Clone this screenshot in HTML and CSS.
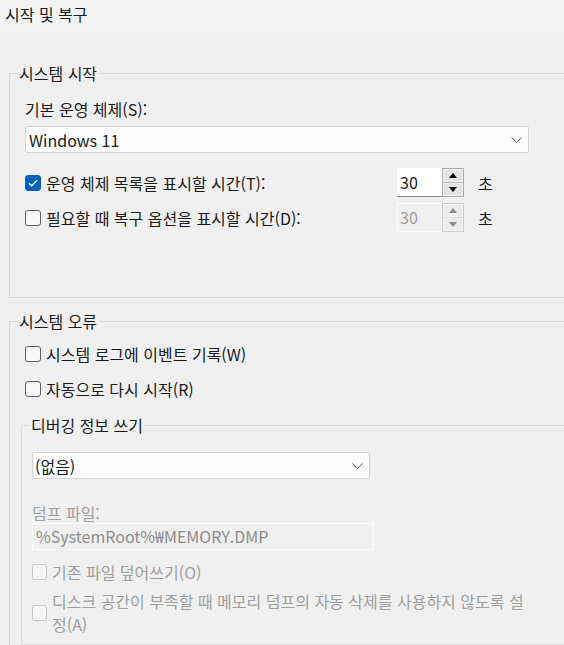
FILE: index.html
```html
<!DOCTYPE html>
<html lang="ko">
<head>
  <meta charset="UTF-8">
  <title>시작 및 복구</title>
  <link rel="stylesheet" href="styles.css">
</head>
<body>

<div class="titlebar">시작 및 복구</div>

<div class="page">

  <!-- 시스템 시작 -->
  <fieldset class="group">
    <legend>시스템 시작</legend>
    <div class="group-body start-body">
      <div class="field-label">기본 운영 체제(S):</div>
      <div class="select os-select">
        <span>Windows 11</span>
        <svg class="chevron" width="11" height="6" viewBox="0 0 11 6"><polyline points="0.5,0.5 5.5,5.5 10.5,0.5" fill="none" stroke="#5c5c5c" stroke-width="1"/></svg>
      </div>

      <div class="timer-row first">
        <label class="check">
          <span class="box checked">
            <svg width="10" height="8" viewBox="0 0 10 8"><polyline points="1,4.2 3.7,6.8 9,1.2" fill="none" stroke="#fff" stroke-width="1.3"/></svg>
          </span>
          <span>운영 체제 목록을 표시할 시간(T):</span>
        </label>
        <div class="spin">
          <span class="spin-value">30</span>
          <span class="spin-btns">
            <span class="spin-btn"><i class="arrow up"></i></span>
            <span class="spin-btn"><i class="arrow down"></i></span>
          </span>
        </div>
        <span class="unit">초</span>
      </div>

      <div class="timer-row">
        <label class="check">
          <span class="box"></span>
          <span>필요할 때 복구 옵션을 표시할 시간(D):</span>
        </label>
        <div class="spin disabled">
          <span class="spin-value">30</span>
          <span class="spin-btns">
            <span class="spin-btn"><i class="arrow up"></i></span>
            <span class="spin-btn"><i class="arrow down"></i></span>
          </span>
        </div>
        <span class="unit">초</span>
      </div>
    </div>
  </fieldset>

  <!-- 시스템 오류 -->
  <fieldset class="group error-group">
    <legend>시스템 오류</legend>
    <div class="group-body error-body">
      <label class="check check-row">
        <span class="box"></span>
        <span>시스템 로그에 이벤트 기록(W)</span>
      </label>
      <label class="check check-row restart">
        <span class="box"></span>
        <span>자동으로 다시 시작(R)</span>
      </label>

      <fieldset class="group debug-group">
        <legend>디버깅 정보 쓰기</legend>
        <div class="group-body debug-body">
          <div class="select dump-select">
            <span>(없음)</span>
            <svg class="chevron" width="11" height="6" viewBox="0 0 11 6"><polyline points="0.5,0.5 5.5,5.5 10.5,0.5" fill="none" stroke="#5c5c5c" stroke-width="1"/></svg>
          </div>
          <div class="field-label disabled dump-label">덤프 파일:</div>
          <div class="textbox disabled">%SystemRoot%₩MEMORY.DMP</div>
          <label class="check check-row disabled overwrite">
            <span class="box small"></span>
            <span>기존 파일 덮어쓰기(O)</span>
          </label>
          <label class="check disabled wrap-row">
            <span class="box small"></span>
            <span class="wrap-text">디스크 공간이 부족할 때 메모리 덤프의 자동 삭제를 사용하지 않도록 설정(A)</span>
          </label>
        </div>
      </fieldset>
    </div>
  </fieldset>

</div>

</body>
</html>
```

FILE: styles.css
```css
body {
  margin: 0;
  background-color: #f0f0f0;
  color: #1a1a1a;
  font-family: "Noto Sans CJK KR", "Noto Sans", sans-serif;
  font-size: 16px;
  line-height: 20px;
  overflow: hidden;
}

.titlebar {
  height: 33px;
  background-color: #f3f3f3;
  padding-left: 5px;
  line-height: 28px;
}

.page {
  width: 640px;
  padding: 30px 0 0 9px;
}

/* group boxes */
.group {
  margin: 0;
  padding: 0;
  border: 1px solid #dadada;
  min-width: 0;
}

.group legend {
  margin-left: 7px;
  padding: 0 2px;
  line-height: 20px;
}

.start-body {
  padding: 16px 0 65px 15px;
}

.error-group {
  margin-top: 13px;
}

.error-body {
  padding: 12px 0 12px 15px;
}

.debug-group {
  margin: 15px 0 0 -4px;
}

.debug-body {
  padding: 17px 0 8px 10px;
}

.field-label.disabled,
.check.disabled {
  color: #9e9e9e;
}

/* combo box */
.select {
  box-sizing: border-box;
  height: 27px;
  display: flex;
  align-items: center;
  justify-content: space-between;
  background-color: #fdfdfd;
  border: 1px solid #d3d3d3;
  border-radius: 2px;
  padding: 0 6px 0 3px;
}

.os-select {
  width: 504px;
  margin-top: 7px;
}

.dump-select {
  width: 338px;
  padding-left: 2px;
}

.chevron {
  display: block;
}

/* text box */
.textbox {
  box-sizing: border-box;
  width: 342px;
  height: 27px;
  line-height: 25px;
  padding-left: 3px;
  border: 1px solid #fbfbfb;
  color: #8c8c8c;
}

.dump-label {
  margin-top: 24px;
}

/* check boxes */
.check {
  display: flex;
  align-items: center;
  gap: 5px;
}

.check-row {
  height: 22px;
}

.restart {
  margin-top: 13px;
}

.overwrite {
  margin-top: 11px;
}

.wrap-row {
  margin-top: 7px;
  line-height: 23px;
}

.wrap-text {
  width: 478px;
}

.box {
  box-sizing: border-box;
  flex: none;
  width: 16px;
  height: 16px;
  border: 1px solid #5e5e5e;
  border-radius: 3px;
  background-color: #f8f8f8;
  display: flex;
  align-items: center;
  justify-content: center;
}

.box.small {
  width: 15px;
}

.box.checked {
  background-color: #0062bd;
  border-color: #0062bd;
}

.check.disabled .box {
  border-color: #c6c6c6;
  background-color: #f6f6f6;
}

/* timer rows with spinner */
.timer-row {
  display: grid;
  grid-template-columns: 358px 67px auto;
  column-gap: 14px;
  align-items: center;
  height: 29px;
  margin-top: 6px;
}

.timer-row.first {
  margin-top: 15px;
}

.spin {
  display: flex;
  height: 29px;
}

.spin-value {
  box-sizing: border-box;
  width: 45px;
  height: 29px;
  padding: 4px 0 0 3px;
  background-color: #fff;
  border-bottom: 1px solid #8a8a8a;
}

.spin-btns {
  box-sizing: border-box;
  width: 22px;
  display: flex;
  flex-direction: column;
  gap: 1px;
  border: 1px solid #aaaaaa;
  background-color: #b8b8b8;
}

.spin-btn {
  flex: 1;
  display: flex;
  align-items: center;
  justify-content: center;
  background-color: #e4e4e4;
  border: 1px solid #f2f2f2;
}

.arrow {
  width: 0;
  height: 0;
  border-left: 4px solid transparent;
  border-right: 4px solid transparent;
}

.arrow.up {
  border-bottom: 5px solid #000;
}

.arrow.down {
  border-top: 5px solid #000;
}

.spin.disabled .spin-value {
  background-color: #f0f0f0;
  border: 1px solid #fbfbfb;
  padding: 3px 0 0 2px;
  color: #9e9e9e;
}

.spin.disabled .spin-btns {
  border-color: #cccccc;
  background-color: #dcdcdc;
}

.spin.disabled .spin-btn {
  background-color: #ececec;
}

.spin.disabled .arrow.up {
  border-bottom-color: #8a8a8a;
}

.spin.disabled .arrow.down {
  border-top-color: #8a8a8a;
}
```
